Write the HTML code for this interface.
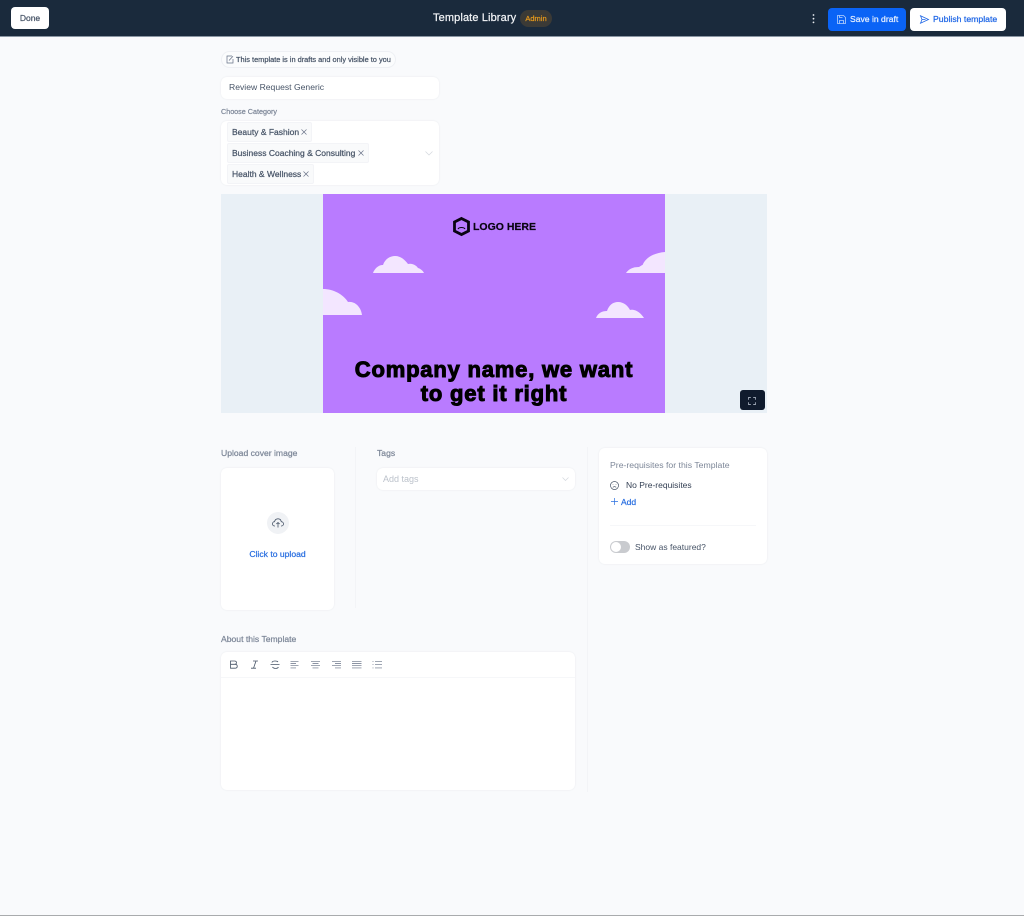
<!DOCTYPE html>
<html lang="en"><head><meta charset="utf-8"><title>Template Library</title>
<style>
*{box-sizing:border-box}
html,body{margin:0;padding:0;width:1024px;height:916px;overflow:hidden;background:#f9fafc;font-family:"Liberation Sans",sans-serif;color:#344054}
.a{position:absolute}
.t{position:absolute;white-space:nowrap;line-height:1}
.m{-webkit-text-stroke:.22px currentColor}
.card{position:absolute;background:#fff;border-radius:6px;box-shadow:0 0 2px rgba(16,24,40,.07)}
.chip{position:absolute;left:227px;height:20px;background:#f9fafb;border:1px solid #f3f4f7;border-radius:2px}
svg{position:absolute;overflow:visible}
</style></head><body>
<div class="a" style="left:0;top:0;width:1024px;height:37px;background:#1a2a3c;border-bottom:1px solid #8a96a3"></div>
<div class="a" style="left:11px;top:7px;width:38px;height:22px;background:#fff;border-radius:4px"></div>
<div class="t m" style="left:11px;top:14px;width:38px;text-align:center;font-size:8.5px;color:#475467">Done</div>
<div class="t m" style="left:433px;top:13px;font-size:11px;color:#f2f4f7;letter-spacing:.12px">Template Library</div>
<div class="a" style="left:520px;top:10px;width:32px;height:17px;background:#3b3a36;border-radius:9px"></div>
<div class="t m" style="left:520px;top:15px;width:32px;text-align:center;font-size:7.5px;color:#e89a1c">Admin</div>
<svg style="left:812px;top:14px" width="4" height="10"><circle cx="1.5" cy="1" r=".9" fill="#e8ebef"/><circle cx="1.5" cy="4.7" r=".9" fill="#e8ebef"/><circle cx="1.5" cy="8.4" r=".9" fill="#e8ebef"/></svg>
<div class="a" style="left:828px;top:8px;width:78px;height:23px;background:#0a63f6;border-radius:4px"></div>
<svg style="left:837px;top:15px" width="9" height="9" fill="none" stroke="#b9d2fc" stroke-width=".8"><path d="M.5.5h6l2 2v6h-8zM2.5 8.5v-3h4v3M2.5.5v2h3"/></svg>
<div class="t m" style="left:850px;top:15px;font-size:8.6px;color:#e6effe">Save in draft</div>
<div class="a" style="left:910px;top:8px;width:96px;height:23px;background:#fff;border-radius:4px"></div>
<svg style="left:920px;top:15px" width="9" height="9" fill="none" stroke="#1e66e6" stroke-width=".8"><path d="M.5.8L8.5 4.5.5 8.2 2 4.5zM2 4.500h3.500"/></svg>
<div class="t m" style="left:933px;top:15px;font-size:8.7px;color:#1e66e6">Publish template</div>

<div class="a" style="left:221px;top:51px;width:175px;height:17px;border:1px solid #eef0f4;border-radius:9px;background:#fbfcfd"></div>
<svg style="left:226px;top:55px" width="8" height="9" fill="none" stroke="#667085" stroke-width=".7"><path d="M6 1H1v7h6V4M3 5.500L7 1.200"/></svg>
<div class="t m" style="left:236px;top:55.5px;font-size:7.4px;color:#475467">This template is in drafts and only visible to you</div>

<div class="card" style="left:221px;top:77px;width:218px;height:22px"></div>
<div class="t" style="left:229px;top:83px;font-size:8.6px;color:#475467">Review Request Generic</div>
<div class="t m" style="left:221px;top:107.5px;font-size:7.2px;color:#7d8798">Choose Category</div>

<div class="card" style="left:221px;top:121px;width:218px;height:64px"></div>
<div class="chip" style="top:122px;width:85px"></div>
<div class="t m" style="left:232px;top:127.5px;font-size:8.5px;color:#475467">Beauty &amp; Fashion</div>
<svg style="left:301px;top:129px" width="6" height="6" stroke="#667085" stroke-width=".7"><path d="M.5.5l5 5M5.500.5l-5 5"/></svg>
<div class="chip" style="top:143px;width:142px"></div>
<div class="t m" style="left:232px;top:148.5px;font-size:8.5px;color:#475467">Business Coaching &amp; Consulting</div>
<svg style="left:358px;top:150px" width="6" height="6" stroke="#667085" stroke-width=".7"><path d="M.5.5l5 5M5.500.5l-5 5"/></svg>
<div class="chip" style="top:164px;width:87px"></div>
<div class="t m" style="left:232px;top:169.5px;font-size:8.5px;color:#475467">Health &amp; Wellness</div>
<svg style="left:303px;top:171px" width="6" height="6" stroke="#667085" stroke-width=".7"><path d="M.5.5l5 5M5.500.5l-5 5"/></svg>
<svg style="left:425px;top:151px" width="8" height="5" fill="none" stroke="#d3d7dd" stroke-width=".7"><path d="M.5.5L4 4 7.500.5"/></svg>

<div class="a" style="left:221px;top:194px;width:546px;height:219px;background:#e9f0f6"></div>
<div class="a" style="left:323px;top:194px;width:342px;height:219px;background:#b97bff;overflow:hidden">
<svg style="left:0;top:0" width="342" height="219" fill="#f3e6ff">
<path d="M50 79C52 74 56 71 60 71C62 65 67 62 72 62C78 62 82 66 85 70C89 69 93 71 95 74C98 75 100 77 101 79Z"/>
<path d="M303 79C306 75 310 73 316 73C319 71 320 71 320 70C323 64 330 59 342 58V79Z"/>
<path d="M0 95C10 95 20 100 25 108C32 107 38 113 39 121H0Z"/>
<path d="M273 124C275 119 279 117 284 117C286 111 290 108 295 108C301 108 305 112 307 116C312 115 317 118 321 124Z"/>
</svg>
<svg style="left:130px;top:23px" width="18" height="19" fill="none" stroke="#0a0412" stroke-width="2.8"><path d="M8.500 1.500L15.500 5v9l-7 3.500L1.500 14V5z"/><path d="M5 12c1-2 6-2 7 0" stroke-width="1"/></svg>
<div class="t" style="left:150px;top:27.5px;font-size:10.5px;font-weight:700;color:#0a0412;-webkit-text-stroke:.2px #0a0412">LOGO HERE</div>
<div class="t" style="left:0;width:342px;top:164px;text-align:center;font-size:22px;font-weight:700;color:#000;-webkit-text-stroke:1px #000;line-height:23.5px;letter-spacing:.8px;white-space:normal">Company name, we want<br>to get it right</div>
</div>
<div class="a" style="left:740px;top:390px;width:25px;height:20px;background:#101b2d;border-radius:3px"></div>
<svg style="left:748px;top:397px" width="8" height="8" fill="none" stroke="#9aa3b1" stroke-width=".9"><path d="M.5 2.800V.5H2.800M5.200.5H7.500V2.800M7.500 5.200V7.500H5.200M2.800 7.500H.5V5.200"/></svg>

<div class="t m" style="left:221px;top:449px;font-size:8.6px;color:#7d8798">Upload cover image</div>
<div class="card" style="left:221px;top:468px;width:113px;height:142px"></div>
<div class="a" style="left:267px;top:512px;width:22px;height:22px;border-radius:50%;background:#f0f2f5"></div>
<svg style="left:272px;top:518px" width="12" height="10" fill="none" stroke="#475467" stroke-width=".8"><path d="M3 8H2.500C1 8 .5 6.800.5 5.800.5 4.500 1.500 3.700 2.500 3.700 3 1.800 4.500.8 6 .8c1.800 0 3 1.200 3.300 2.900 1.300 0 2.200 1 2.200 2.200S10.500 8 9.500 8H9M6 9.500V4.500M4.300 6L6 4.500 7.700 6"/></svg>
<div class="t m" style="left:221px;top:549.5px;width:113px;text-align:center;font-size:8.6px;color:#2a6fe0">Click to upload</div>

<div class="a" style="left:355px;top:447px;width:1px;height:161px;background:#f3f4f7"></div>
<div class="t m" style="left:377px;top:449px;font-size:8.6px;color:#7d8798">Tags</div>
<div class="card" style="left:377px;top:468px;width:198px;height:22px"></div>
<div class="t" style="left:383px;top:474.500px;font-size:9px;color:#bcc2cb">Add tags</div>
<svg style="left:562px;top:477px" width="7" height="4" fill="none" stroke="#d3d7dd" stroke-width=".7"><path d="M.5.500L3.500 3.500 6.500.5"/></svg>

<div class="a" style="left:587px;top:447px;width:1px;height:345px;background:#f3f4f7"></div>
<div class="card" style="left:599px;top:448px;width:168px;height:116px"></div>
<div class="t" style="left:610px;top:460.5px;font-size:8.7px;color:#7d8798">Pre-requisites for this Template</div>
<svg style="left:610px;top:481px" width="9" height="9" fill="none" stroke="#475467" stroke-width=".7"><circle cx="4.500" cy="4.500" r="4"/><path d="M2.800 6.300c1-.8 2.400-.8 3.400 0M3 3.200v.6M6 3.200v.6"/></svg>
<div class="t" style="left:626px;top:481px;font-size:8.5px;color:#344054">No Pre-requisites</div>
<svg style="left:611px;top:498px" width="7" height="7" stroke="#2a6fe0" stroke-width=".7"><path d="M3.500 0v7M0 3.500h7"/></svg>
<div class="t m" style="left:621px;top:497.5px;font-size:8.5px;color:#2a6fe0">Add</div>
<div class="a" style="left:610px;top:525px;width:146px;height:1px;background:#f6f7f9"></div>
<div class="a" style="left:610px;top:541px;width:20px;height:12px;border-radius:6px;background:#c9cbcf"></div>
<div class="a" style="left:611px;top:542px;width:10px;height:10px;border-radius:50%;background:#fff"></div>
<div class="t" style="left:635px;top:543px;font-size:8.5px;color:#475467">Show as featured?</div>

<div class="t m" style="left:221px;top:634.5px;font-size:8.6px;color:#7d8798">About this Template</div>
<div class="card" style="left:221px;top:652px;width:354px;height:138px"></div>
<div class="a" style="left:221px;top:677px;width:354px;height:1px;background:#f6f7f9"></div>
<svg style="left:229px;top:659px" width="160" height="11" fill="none" stroke="#475467" stroke-width=".8">
<path d="M1.500 2h4c2.600 0 2.600 3.300 0 3.300H1.500zM1.500 5.300h4.500c3 0 3 3.900 0 3.900H1.500z"/>
<path d="M24 2h5M22 9.200h5M27 2l-2.500 7.200"/>
<path d="M49 3c-1-1.500-6-1.300-6 .6M41.500 5.500h9M43.500 8c1 1.800 5.500 1.800 5.800 0"/>
<g stroke="#667085" stroke-width=".65">
<path d="M61.500 2.300h8M61.500 4.500h5.500M61.500 6.700h8M61.500 8.900h5.500"/>
<path d="M82 2.300h9M83.500 4.500h6M82 6.700h9M83.500 8.900h6"/>
<path d="M103 2.300h9M106 4.500h6M103 6.700h9M106 8.900h6"/>
<path d="M123 2.300h9.500M123 4.500h9.500M123 6.700h9.500M123 8.900h9.500"/>
<path d="M146 2.300h7M146 5.600h7M146 8.900h7M143.500 2.300h1M143.500 5.600h1M143.500 8.900h1"/>
</g>
</svg>
<div class="a" style="left:0;top:915px;width:1024px;height:1px;background:#a9abad"></div>
</body></html>
